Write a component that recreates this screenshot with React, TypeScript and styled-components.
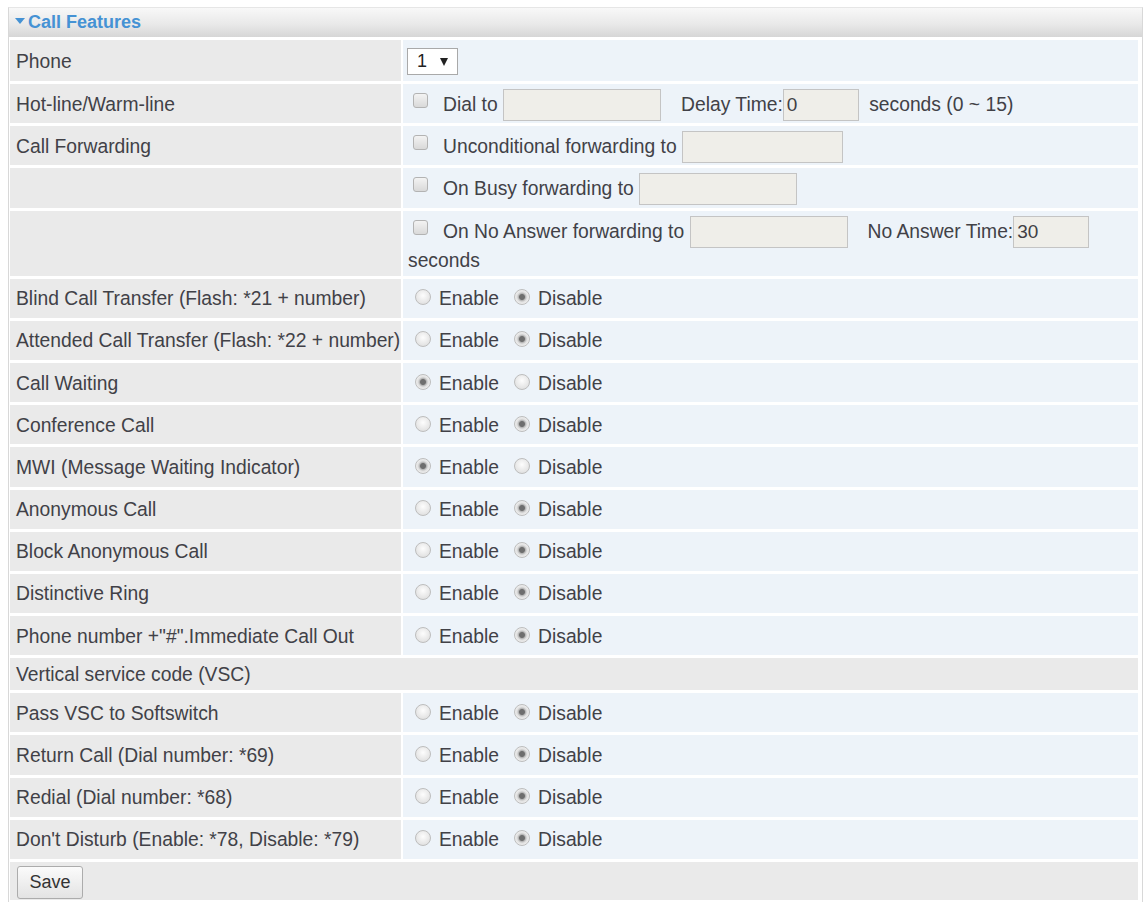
import React from 'react';
import styled, {createGlobalStyle} from 'styled-components';

const GlobalStyle = createGlobalStyle`
    body {
        margin: 0;
        background: #fff;
        font-family: "Liberation Sans", Arial, sans-serif;
        color: #414147;
    }
`;

type Choice = 'enable' | 'disable';

const toggles: {label: string; value: Choice}[] = [
    {label: 'Blind Call Transfer (Flash: *21 + number)', value: 'disable'},
    {label: 'Attended Call Transfer (Flash: *22 + number)', value: 'disable'},
    {label: 'Call Waiting', value: 'enable'},
    {label: 'Conference Call', value: 'disable'},
    {label: 'MWI (Message Waiting Indicator)', value: 'enable'},
    {label: 'Anonymous Call', value: 'disable'},
    {label: 'Block Anonymous Call', value: 'disable'},
    {label: 'Distinctive Ring', value: 'disable'},
    {label: 'Phone number +"#".Immediate Call Out', value: 'disable'},
];

const vscToggles: {label: string; value: Choice}[] = [
    {label: 'Pass VSC to Softswitch', value: 'disable'},
    {label: 'Return Call (Dial number: *69)', value: 'disable'},
    {label: 'Redial (Dial number: *68)', value: 'disable'},
    {label: "Don't Disturb (Enable: *78, Disable: *79)", value: 'disable'},
];

function EnableDisable({name, value}: {name: string; value: Choice}) {
    return (
        <>
            <Option>
                <Radio type="radio" name={name} defaultChecked={value === 'enable'}/>
                Enable
            </Option>
            <Option>
                <Radio type="radio" name={name} defaultChecked={value === 'disable'}/>
                Disable
            </Option>
        </>
    );
}

export default function App() {
    return (
        <Page>
            <GlobalStyle/>
            <Panel>
                <Header>
                    <Caret/>
                    Call Features
                </Header>
                <Body>
                    <Label $h={41}>Phone</Label>
                    <Value $h={41}>
                        <SelectBox>
                            1
                            <SelectArrow/>
                        </SelectBox>
                    </Value>

                    <Label>Hot-line/Warm-line</Label>
                    <Value>
                        <Line>
                            <Check type="checkbox"/>Dial to <Field $w={158} $gap={20}/>Delay Time:<Field
                            $w={76} $gap={5} defaultValue="0"/> seconds (0 ~ 15)
                        </Line>
                    </Value>

                    <Label>Call Forwarding</Label>
                    <Value>
                        <Line>
                            <Check type="checkbox"/>Unconditional forwarding to <Field $w={161}/>
                        </Line>
                    </Value>

                    <Label/>
                    <Value>
                        <Line>
                            <Check type="checkbox"/>On Busy forwarding to <Field $w={158}/>
                        </Line>
                    </Value>

                    <Label $h={65}/>
                    <Value $h={65}>
                        <Line>
                            <Check type="checkbox"/>On No Answer forwarding to <Field $w={158} $gap={20}/>No
                            Answer Time:<Field $w={76} defaultValue="30"/> seconds
                        </Line>
                    </Value>

                    {toggles.map((t, i) => (
                        <React.Fragment key={t.label}>
                            <Label>{t.label}</Label>
                            <Value>
                                <EnableDisable name={`t${i}`} value={t.value}/>
                            </Value>
                        </React.Fragment>
                    ))}

                    <Wide $h={32}>Vertical service code (VSC)</Wide>

                    {vscToggles.map((t, i) => (
                        <React.Fragment key={t.label}>
                            <Label>{t.label}</Label>
                            <Value>
                                <EnableDisable name={`v${i}`} value={t.value}/>
                            </Value>
                        </React.Fragment>
                    ))}

                    <Wide $h={38}>
                        <SaveButton>Save</SaveButton>
                    </Wide>
                </Body>
            </Panel>
        </Page>
    );
}

const Page = styled.div`
    padding: 7px 0 0 8px;
`;

const Panel = styled.div`
    width: 1135px;
    box-sizing: border-box;
    border: 1px solid #d8d8d8;
    border-top-color: #e6e6e6;
    border-bottom: none;
`;

const Header = styled.div`
    height: 29px;
    display: flex;
    align-items: center;
    padding-left: 6px;
    background: linear-gradient(#f8f8f8, #e9e9e9 55%, #d6d6d6);
    color: #4592d4;
    font-size: 18px;
    font-weight: bold;
`;

const Caret = styled.span`
    width: 0;
    height: 0;
    border-left: 5px solid transparent;
    border-right: 5px solid transparent;
    border-top: 6px solid #4592d4;
    margin-right: 3px;
    margin-top: -3px;
`;

const Body = styled.div`
    display: grid;
    grid-template-columns: 391px 735px;
    column-gap: 2px;
    row-gap: 3px;
    padding: 3px 4px 2px 1px;
`;

const Label = styled.div<{$h?: number}>`
    height: ${p => p.$h ?? 39.2}px;
    box-sizing: border-box;
    display: flex;
    align-items: center;
    padding: 2px 6px 0;
    background: #eaeaea;
    font-size: 19.3px;
    white-space: nowrap;
`;

const Value = styled.div<{$h?: number}>`
    height: ${p => p.$h ?? 39.2}px;
    box-sizing: border-box;
    display: flex;
    align-items: center;
    padding: 2px 5px 0;
    background: #edf3f9;
    font-size: 19.3px;
`;

const Wide = styled(Label)`
    grid-column: 1 / -1;
`;

const Line = styled.div`
    line-height: 1.3;
`;

const Check = styled.input`
    appearance: none;
    width: 15px;
    height: 15px;
    box-sizing: border-box;
    margin: 0 15px 3px 5px;
    border: 1px solid #b3b3b3;
    border-radius: 3px;
    background: linear-gradient(#f3f3f3, #d9d9d9);
    vertical-align: baseline;
`;

const Field = styled.input<{$w: number; $gap?: number}>`
    width: ${p => p.$w}px;
    height: 32px;
    box-sizing: border-box;
    margin: 0 ${p => p.$gap ?? 0}px 0 0;
    padding: 0 3px;
    border: 1px solid #c4c4c4;
    background: #efeee9;
    font-family: "Liberation Sans", Arial, sans-serif;
    font-size: 19px;
    color: #3f3f44;
    vertical-align: baseline;
    outline: none;
`;

const Option = styled.label`
    display: inline-flex;
    align-items: center;
    margin-left: 7px;

    & + & {
        margin-left: 15px;
    }
`;

const Radio = styled.input`
    appearance: none;
    width: 16px;
    height: 16px;
    box-sizing: border-box;
    margin: -4px 8px 0 0;
    border: 1px solid #bdbdbd;
    border-radius: 50%;
    background: radial-gradient(circle at 50% 40%, #fdfdfd, #d9d9d9);

    &:checked {
        background: radial-gradient(circle, #6e6e6e 0 2.5px, #b5b5b5 3.5px, #e0e0e0 5px, #f2f2f2 7.5px);
    }
`;

const SelectBox = styled.div`
    display: flex;
    align-items: center;
    width: 51px;
    height: 27px;
    box-sizing: border-box;
    margin-left: -1px;
    padding-left: 9px;
    border: 1px solid #a9a9a9;
    background: #fff;
    font-size: 18px;
    color: #222;
`;

const SelectArrow = styled.span`
    width: 0;
    height: 0;
    margin-left: 13px;
    border-left: 4px solid transparent;
    border-right: 4px solid transparent;
    border-top: 8px solid #222;
`;

const SaveButton = styled.button`
    width: 66px;
    height: 33px;
    margin-left: 1px;
    border: 1px solid #acacac;
    border-radius: 3px;
    background: linear-gradient(#fbfbfb, #e3e3e3);
    font-family: "Liberation Sans", Arial, sans-serif;
    font-size: 18px;
    color: #333;
`;
